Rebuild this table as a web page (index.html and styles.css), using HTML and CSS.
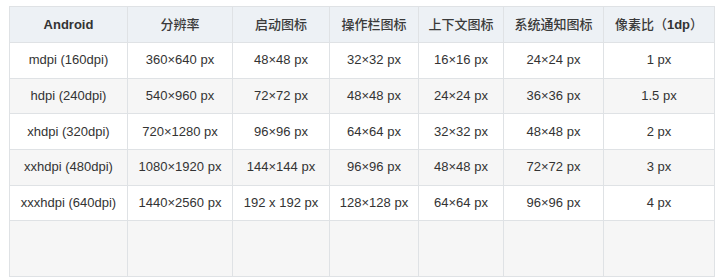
FILE: index.html
```html
<!DOCTYPE html>
<html lang="zh">
<head>
<meta charset="utf-8">
<title>Android 图标尺寸</title>
<link rel="stylesheet" href="styles.css">
</head>
<body>
<table class="spec">
  <thead>
    <tr>
      <th>Android</th>
      <th><span class="zh">分辨率</span></th>
      <th><span class="zh">启动图标</span></th>
      <th><span class="zh">操作栏图标</span></th>
      <th><span class="zh">上下文图标</span></th>
      <th><span class="zh">系统通知图标</span></th>
      <th><span class="zh">像素比（</span>1dp<span class="zh">）</span></th>
    </tr>
  </thead>
  <tbody>
    <tr><td>mdpi (160dpi)</td><td>360×640 px</td><td>48×48 px</td><td>32×32 px</td><td>16×16 px</td><td>24×24 px</td><td>1 px</td></tr>
    <tr><td>hdpi (240dpi)</td><td>540×960 px</td><td>72×72 px</td><td>48×48 px</td><td>24×24 px</td><td>36×36 px</td><td>1.5 px</td></tr>
    <tr><td>xhdpi (320dpi)</td><td>720×1280 px</td><td>96×96 px</td><td>64×64 px</td><td>32×32 px</td><td>48×48 px</td><td>2 px</td></tr>
    <tr><td>xxhdpi (480dpi)</td><td>1080×1920 px</td><td>144×144 px</td><td>96×96 px</td><td>48×48 px</td><td>72×72 px</td><td>3 px</td></tr>
    <tr><td>xxxhdpi (640dpi)</td><td>1440×2560 px</td><td>192 x 192 px</td><td>128×128 px</td><td>64×64 px</td><td>96×96 px</td><td>4 px</td></tr>
    <tr class="empty"><td></td><td></td><td></td><td></td><td></td><td></td><td></td></tr>
  </tbody>
</table>
</body>
</html>
```

FILE: styles.css
```css
html, body {
  margin: 0;
  background: #ffffff;
}
body {
  padding: 6px 0 0 9px;
  font-family: "Liberation Sans", Arial, "Noto Sans CJK SC", sans-serif;
  font-size: 13px;
  color: #333333;
}
.spec {
  border-collapse: collapse;
  table-layout: fixed;
  width: 705px;
}
.spec th,
.spec td {
  box-sizing: border-box;
  border: 1px solid #dfe2e5;
  text-align: center;
  padding: 0 4px;
  height: 35.67px;
  line-height: 18px;
  white-space: nowrap;
}
.spec th {
  background: #edf1f5;
  font-weight: bold;
  height: 36px;
}
.spec th .zh {
  font-weight: 500;
  color: #3a3a3a;
}
.spec tbody tr:nth-child(even) td {
  background: #f6f6f6;
}
.spec tbody tr.empty td {
  height: 56px;
}
.spec th:nth-child(1) { width: 118px; }
.spec th:nth-child(2) { width: 105px; }
.spec th:nth-child(3) { width: 97px; }
.spec th:nth-child(4) { width: 89px; }
.spec th:nth-child(5) { width: 85px; }
.spec th:nth-child(6) { width: 100px; }
.spec th:nth-child(7) { width: 111px; }
```
